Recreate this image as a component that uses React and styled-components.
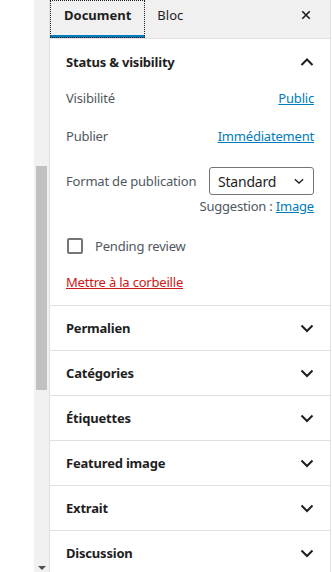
import styled, { createGlobalStyle } from "styled-components";

const GlobalStyle = createGlobalStyle`
  html, body {
    margin: 0;
    padding: 0;
    background: #fff;
  }
  body {
    font-family: "Noto Sans", "Open Sans", sans-serif;
    letter-spacing: -0.2px;
    color: #1e1e1e;
  }
`;

const Page = styled.div`
  display: flex;
  height: 572px;
  overflow: hidden;
`;

const Gutter = styled.div`
  width: 34px;
  flex-shrink: 0;
  background: #fff;
`;

const ScrollTrack = styled.div`
  width: 15px;
  flex-shrink: 0;
  background: #f1f1f1;
  display: flex;
  flex-direction: column;
  align-items: center;
`;

const ScrollThumb = styled.div`
  margin-top: 166px;
  width: 11px;
  height: 224px;
  background: #c1c1c1;
`;

const ScrollArrow = styled.div`
  margin-top: auto;
  margin-bottom: 2px;
  width: 0;
  height: 0;
  border-left: 4px solid transparent;
  border-right: 4px solid transparent;
  border-top: 4px solid #505050;
`;

const Sidebar = styled.aside`
  width: 280px;
  flex-shrink: 0;
  border-left: 1px solid #e0e0e0;
  border-right: 1px solid #e0e0e0;
  display: flex;
  flex-direction: column;
  background: #fff;

  & > * {
    flex-shrink: 0;
  }
`;

const Tabs = styled.div`
  display: flex;
  align-items: stretch;
  height: 38px;
  background: #f0f0f1;
  border-bottom: 1px solid #e0e0e0;
`;

const Tab = styled.button`
  font: inherit;
  font-size: 13px;
  font-weight: ${(p) => (p.$active ? 700 : 400)};
  color: #1e1e1e;
  background: transparent;
  border: none;
  padding: 0 ${(p) => (p.$active ? 14 : 12)}px 8px;
  cursor: pointer;
  outline: ${(p) => (p.$active ? "1px dotted #1e1e1e" : "none")};
  outline-offset: -1px;
  box-shadow: ${(p) => (p.$active ? "inset 0 -3px 0 #007cba" : "none")};
`;

const CloseButton = styled.button`
  margin-left: auto;
  width: 48px;
  background: transparent;
  border: none;
  display: flex;
  align-items: center;
  justify-content: center;
  color: #1e1e1e;
  padding: 0 0 8px;
`;

const Panel = styled.section`
  border-bottom: 1px solid #e0e0e0;
`;

const PanelHeader = styled.div`
  height: ${(p) => (p.$open ? 46 : 44)}px;
  display: flex;
  align-items: center;
  justify-content: space-between;
  padding: 0 16px;
  font-size: 13px;
  font-weight: 700;
  color: #1e1e1e;
`;

const PanelBody = styled.div`
  padding: 0 16px 14px;
  font-size: 13px;
`;

const Row = styled.div`
  display: flex;
  justify-content: space-between;
  align-items: center;
  height: 26px;
  margin-bottom: 12px;
`;

const Label = styled.span`
  color: #50575e;
`;

const Link = styled.a`
  color: #007cba;
  text-decoration: underline;
  cursor: pointer;
`;

const FormatRow = styled.div`
  display: flex;
  justify-content: space-between;
  align-items: center;
  margin-top: 18px;
  height: 28px;
`;

const Select = styled.div`
  width: 105px;
  height: 28px;
  box-sizing: border-box;
  border: 1px solid #757575;
  border-radius: 3px;
  display: flex;
  align-items: center;
  justify-content: space-between;
  padding: 0 4px 0 8px;
  font-size: 14px;
  color: #1e1e1e;
`;

const Suggestion = styled.div`
  text-align: right;
  color: #50575e;
  line-height: 18px;
  margin-top: 2px;
`;

const CheckRow = styled.label`
  display: flex;
  align-items: center;
  gap: 12px;
  height: 20px;
  margin-top: 21px;
  color: #50575e;
`;

const Checkbox = styled.span`
  width: 16px;
  height: 16px;
  box-sizing: border-box;
  border: 2px solid #757575;
  border-radius: 2px;
  margin-left: 1px;
`;

const Trash = styled.a`
  display: block;
  margin-top: 17px;
  line-height: 18px;
  color: #cc1818;
  text-decoration: underline;
`;

const Chevron = ({ up }) => (
  <svg width="24" height="24" viewBox="0 0 24 24" style={{ marginRight: -5 }}>
    <path
      d={up ? "M6.5 15 12 9.5l5.5 5.5" : "M6.5 9.5 12 15l5.5-5.5"}
      fill="none"
      stroke="#1e1e1e"
      strokeWidth="2"
    />
  </svg>
);

const SmallChevron = () => (
  <svg width="20" height="20" viewBox="0 0 24 24">
    <path d="M7 10l5 4.5 5-4.5" fill="none" stroke="#1e1e1e" strokeWidth="1.6" />
  </svg>
);

const CloseIcon = () => (
  <svg width="20" height="20" viewBox="0 0 24 24">
    <path d="M7.5 7.5l9 9M16.5 7.5l-9 9" stroke="#1e1e1e" strokeWidth="2" fill="none" />
  </svg>
);

const collapsed = [
  "Permalien",
  "Catégories",
  "Étiquettes",
  "Featured image",
  "Extrait",
  "Discussion",
];

export default function App() {
  return (
    <>
      <GlobalStyle />
      <Page>
        <Gutter />
        <ScrollTrack>
          <ScrollThumb />
          <ScrollArrow />
        </ScrollTrack>
        <Sidebar>
          <Tabs>
            <Tab $active>Document</Tab>
            <Tab>Bloc</Tab>
            <CloseButton>
              <CloseIcon />
            </CloseButton>
          </Tabs>
          <Panel>
            <PanelHeader $open>
              Status &amp; visibility
              <Chevron up />
            </PanelHeader>
            <PanelBody>
              <Row>
                <Label>Visibilité</Label>
                <Link>Public</Link>
              </Row>
              <Row>
                <Label>Publier</Label>
                <Link>Immédiatement</Link>
              </Row>
              <FormatRow>
                <Label>Format de publication</Label>
                <Select>
                  Standard
                  <SmallChevron />
                </Select>
              </FormatRow>
              <Suggestion>
                Suggestion : <Link>Image</Link>
              </Suggestion>
              <CheckRow>
                <Checkbox />
                Pending review
              </CheckRow>
              <Trash>Mettre à la corbeille</Trash>
            </PanelBody>
          </Panel>
          {collapsed.map((title) => (
            <Panel key={title}>
              <PanelHeader>
                {title}
                <Chevron />
              </PanelHeader>
            </Panel>
          ))}
        </Sidebar>
      </Page>
    </>
  );
}
